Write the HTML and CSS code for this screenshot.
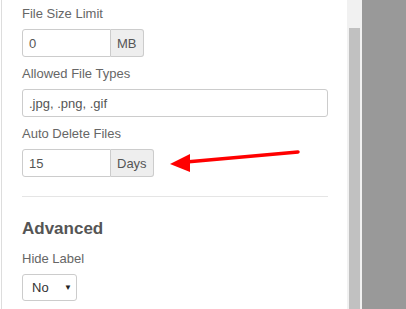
FILE: index.html
```html
<html lang="en-US"><head>
    <title>Field Settings</title>
<link rel="stylesheet" href="styles.css">
</head>

<body>
    <div class="frame">
        <section class="panel">
            <div class="field">
                <label>File Size Limit</label>
                <div class="group short">
                    <span class="box">0</span>
                    <span class="addon">MB</span>
                </div>
            </div>
            <div class="field">
                <label>Allowed File Types</label>
                <div class="group">
                    <span class="box wide">.jpg, .png, .gif</span>
                </div>
            </div>
            <div class="field">
                <label>Auto Delete Files</label>
                <div class="group short">
                    <span class="box">15</span>
                    <span class="addon">Days</span>
                </div>
            </div>

            <hr class="divider">

            <h2>Advanced</h2>
            <div class="field">
                <label>Hide Label</label>
                <div class="select">
                    <span>No</span>
                    <span class="caret">&#9660;</span>
                </div>
            </div>
        </section>
        <div class="scrollbar">
            <div class="thumb"></div>
        </div>
        <div class="backdrop"></div>
    </div>

    <!-- the red pointer drawn over the form -->
    <svg class="pointer" width="406" height="309" viewBox="0 0 406 309">
        <line x1="298" y1="152" x2="186" y2="162" stroke="#f00" stroke-width="3.5" stroke-linecap="round"/>
        <polygon points="170,164 190,154 190,172" fill="#f00"/>
    </svg>
</body></html>
```

FILE: styles.css
```css
body {
    margin: 0;
    font: 13px "Liberation Sans", Arial, sans-serif;
    color: #555;
    overflow: hidden;
}
.frame {
    display: flex;
    height: 309px;
}
.panel {
    width: 325px;
    margin-left: 1px;
    border-left: 1px solid #ddd;
    padding: 5px 0 0 20px;
    background-color: #fff;
}
.field label {
    display: block;
    line-height: 18px;
    margin-bottom: 6px;
    color: #666;
}
.field {
    margin-bottom: 8px;
}
.group {
    display: flex;
    height: 28px;
}
.box {
    display: flex;
    align-items: center;
    width: 89px;
    box-sizing: border-box;
    padding: 0 6px;
    border: 1px solid #ccc;
    border-radius: 3px 0 0 3px;
    color: #555;
}
.box.wide {
    width: 306px;
    border-radius: 3px;
}
.addon {
    display: flex;
    align-items: center;
    padding: 0 6px;
    background-color: #eee;
    border: 1px solid #ccc;
    border-left: none;
    border-radius: 0 3px 3px 0;
}
.divider {
    width: 306px;
    margin: 19px 0 0 0;
    border: none;
    border-top: 1px solid #e5e5e5;
}
h2 {
    font-size: 17px;
    font-weight: bold;
    margin: 21px 0 10px 0;
    line-height: 22px;
}
.select {
    display: flex;
    align-items: center;
    justify-content: space-between;
    width: 55px;
    height: 27px;
    box-sizing: border-box;
    padding: 0 4px 0 9px;
    border: 1px solid #ccc;
    border-radius: 3px;
    color: #333;
}
.caret {
    font-size: 8px;
    color: #222;
}
.scrollbar {
    width: 15px;
    background-color: #f1f1f1;
    padding: 28px 2px 0 2px;
    box-sizing: border-box;
}
.thumb {
    width: 11px;
    height: 281px;
    background-color: #c1c1c1;
}
.backdrop {
    flex: 1;
    background-color: #999;
}
.pointer {
    position: absolute;
    left: 0;
    top: 0;
}
```
